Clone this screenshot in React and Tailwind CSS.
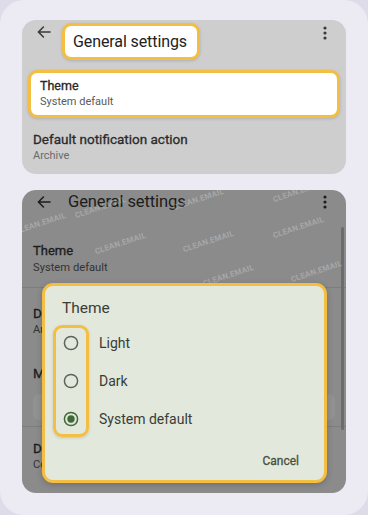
import React from "react";

function BackArrow({ className = "" }) {
  return (
    <svg width="14" height="12" viewBox="0 0 14 12" className={className} fill="none">
      <path d="M13 6H1.8M6.4 1L1.4 6l5 5" stroke="currentColor" strokeWidth="1.6" strokeLinecap="round" strokeLinejoin="round" />
    </svg>
  );
}

function Dots({ className = "" }) {
  return (
    <svg width="4" height="14" viewBox="0 0 4 14" className={className}>
      <circle cx="2" cy="2" r="1.6" fill="currentColor" />
      <circle cx="2" cy="7" r="1.6" fill="currentColor" />
      <circle cx="2" cy="12" r="1.6" fill="currentColor" />
    </svg>
  );
}

function Radio({ checked }) {
  return (
    <svg width="16" height="16" viewBox="0 0 16 16">
      <circle cx="8" cy="8" r="6.6" fill="none" stroke={checked ? "#3e6a37" : "#5f625c"} strokeWidth="1.5" />
      {checked && <circle cx="8" cy="8" r="3.7" fill="#3e6a37" />}
    </svg>
  );
}

const marks = [
  { l: 52, t: 12 },
  { l: 72, t: 48 },
  { l: 160, t: 46 },
  { l: 250, t: 32 },
  { l: 268, t: 76 },
  { l: 180, t: 80 },
  { l: 250, t: -4 },
  { l: 150, t: 4 },
  { l: -8, t: 28 },
];

export default function App() {
  return (
    <div className="w-[368px] h-[515px] bg-[#dddce8] font-['Roboto',sans-serif]">
      <div className="w-full h-full rounded-[24px] bg-[#ecebf4] pt-[20px] px-[22px] flex flex-col gap-[16px]">
        {/* Panel 1 */}
        <div className="relative h-[154px] rounded-[14px] bg-[#cecece] overflow-hidden shrink-0">
          <div className="h-[50px] flex items-start">
            <div className="w-[40px] pl-[15px] pt-[6px] text-[#3a3a3a]">
              <BackArrow />
            </div>
            <div className="mt-[3px] h-[37px] w-[138px] flex items-center pl-[8px] rounded-[9px] border-[3px] border-[#f4be42] bg-white shadow-[0_1px_3px_rgba(0,0,0,0.15)] text-[16px] text-[#222] tracking-[-0.1px]">
              General settings
            </div>
            <div className="ml-auto mr-[19px] mt-[6px] text-[#3a3a3a]">
              <Dots />
            </div>
          </div>
          <div className="mx-[6px] h-[48px] rounded-[9px] border-[3px] border-[#f4be42] bg-white pl-[9px] flex flex-col justify-center shadow-[0_1px_3px_rgba(0,0,0,0.15)]">
            <div className="text-[12.5px] leading-[16px] text-[#262626] [-webkit-text-stroke:0.3px_#262626]">Theme</div>
            <div className="text-[11px] leading-[16px] text-[#5a5a5a]">System default</div>
          </div>
          <div className="px-[11px] pt-[12px]">
            <div className="text-[13.5px] leading-[18px] text-[#2a2a2a] [-webkit-text-stroke:0.3px_#2a2a2a]">Default notification action</div>
            <div className="text-[11px] leading-[16px] text-[#6a6a6a]">Archive</div>
          </div>
        </div>

        {/* Panel 2 */}
        <div className="relative h-[303px] rounded-[14px] bg-[#8b8b8b] overflow-hidden shrink-0">
          <div className="h-[24px] flex items-center">
            <div className="w-[46px] pl-[15px] text-[#1e1e1e] flex">
              <BackArrow />
            </div>
            <div className="text-[16.5px] leading-[20px] text-[#1c1c1c] tracking-[-0.1px]">General settings</div>
            <div className="ml-auto mr-[19px] text-[#1e1e1e] flex">
              <Dots />
            </div>
          </div>
          <div className="px-[11px] pt-[28px] pb-[10px] border-b border-[#7d7d7d]">
            <div className="text-[13px] leading-[17px] text-[#1c1c1c] [-webkit-text-stroke:0.3px_#1c1c1c]">Theme</div>
            <div className="text-[11.2px] leading-[18px] text-[#333]">System default</div>
          </div>
          <div className="px-[11px] pt-[16px]">
            <div className="text-[13.5px] leading-[18px] text-[#1c1c1c] [-webkit-text-stroke:0.3px_#1c1c1c]">Default notification action</div>
            <div className="text-[11px] leading-[16px] text-[#333]">Archive</div>
          </div>
          <div className="px-[11px] pt-[26px]">
            <div className="text-[13.5px] leading-[18px] text-[#1c1c1c] [-webkit-text-stroke:0.3px_#1c1c1c]">Mark as read</div>
          </div>
          <div className="mx-[11px] mt-[12px] h-[26px] rounded-[6px] bg-[#929292]"></div>
          <div className="mt-[6px] border-t border-[#7d7d7d] px-[11px] pt-[12px]">
            <div className="text-[13.5px] leading-[18px] text-[#1c1c1c] [-webkit-text-stroke:0.3px_#1c1c1c]">Default reply action</div>
            <div className="text-[11px] leading-[16px] text-[#333]">Conversation view</div>
          </div>

          {/* scrollbar */}
          <div className="absolute right-[2px] top-[37px] w-[3px] h-[203px] rounded-full bg-[#6c6c6c]"></div>

          {/* watermarks */}
          {marks.map((m, i) => (
            <div
              key={i}
              className="absolute text-[8px] font-bold tracking-[0.2px] text-white/25 -rotate-[18deg] whitespace-nowrap"
              style={{ left: m.l, top: m.t }}
            >
              CLEAN.EMAIL
            </div>
          ))}

          {/* Dialog */}
          <div className="absolute left-[20px] top-[93px] w-[285px] h-[200px] rounded-[11px] border-[3px] border-[#f4be42] bg-[#e3e8dc] shadow-[0_2px_6px_rgba(0,0,0,0.2)]">
            <div className="pl-[17px] pt-[12px] text-[15.5px] leading-[20px] text-[#3b3d38]">Theme</div>
            <div className="flex mt-[7px] ml-[8px]">
              <div className="w-[36px] h-[112px] rounded-[9px] border-[3px] border-[#f4be42] flex flex-col items-center gap-[8px] shadow-[0_1px_3px_rgba(0,0,0,0.15)]">
                <div className="h-[30px] flex items-center"><Radio /></div>
                <div className="h-[30px] flex items-center"><Radio /></div>
                <div className="h-[30px] flex items-center"><Radio checked /></div>
              </div>
              <div className="ml-[10px] pt-[3px] flex flex-col gap-[8px] text-[14px] text-[#3a3c37]">
                <div className="h-[30px] flex items-center">Light</div>
                <div className="h-[30px] flex items-center">Dark</div>
                <div className="h-[30px] flex items-center">System default</div>
              </div>
            </div>
            <div className="mt-[16px] pr-[25px] flex justify-end text-[12px] leading-[16px] text-[#46503f] [-webkit-text-stroke:0.3px_#46503f]">
              Cancel
            </div>
          </div>
        </div>
      </div>
    </div>
  );
}
